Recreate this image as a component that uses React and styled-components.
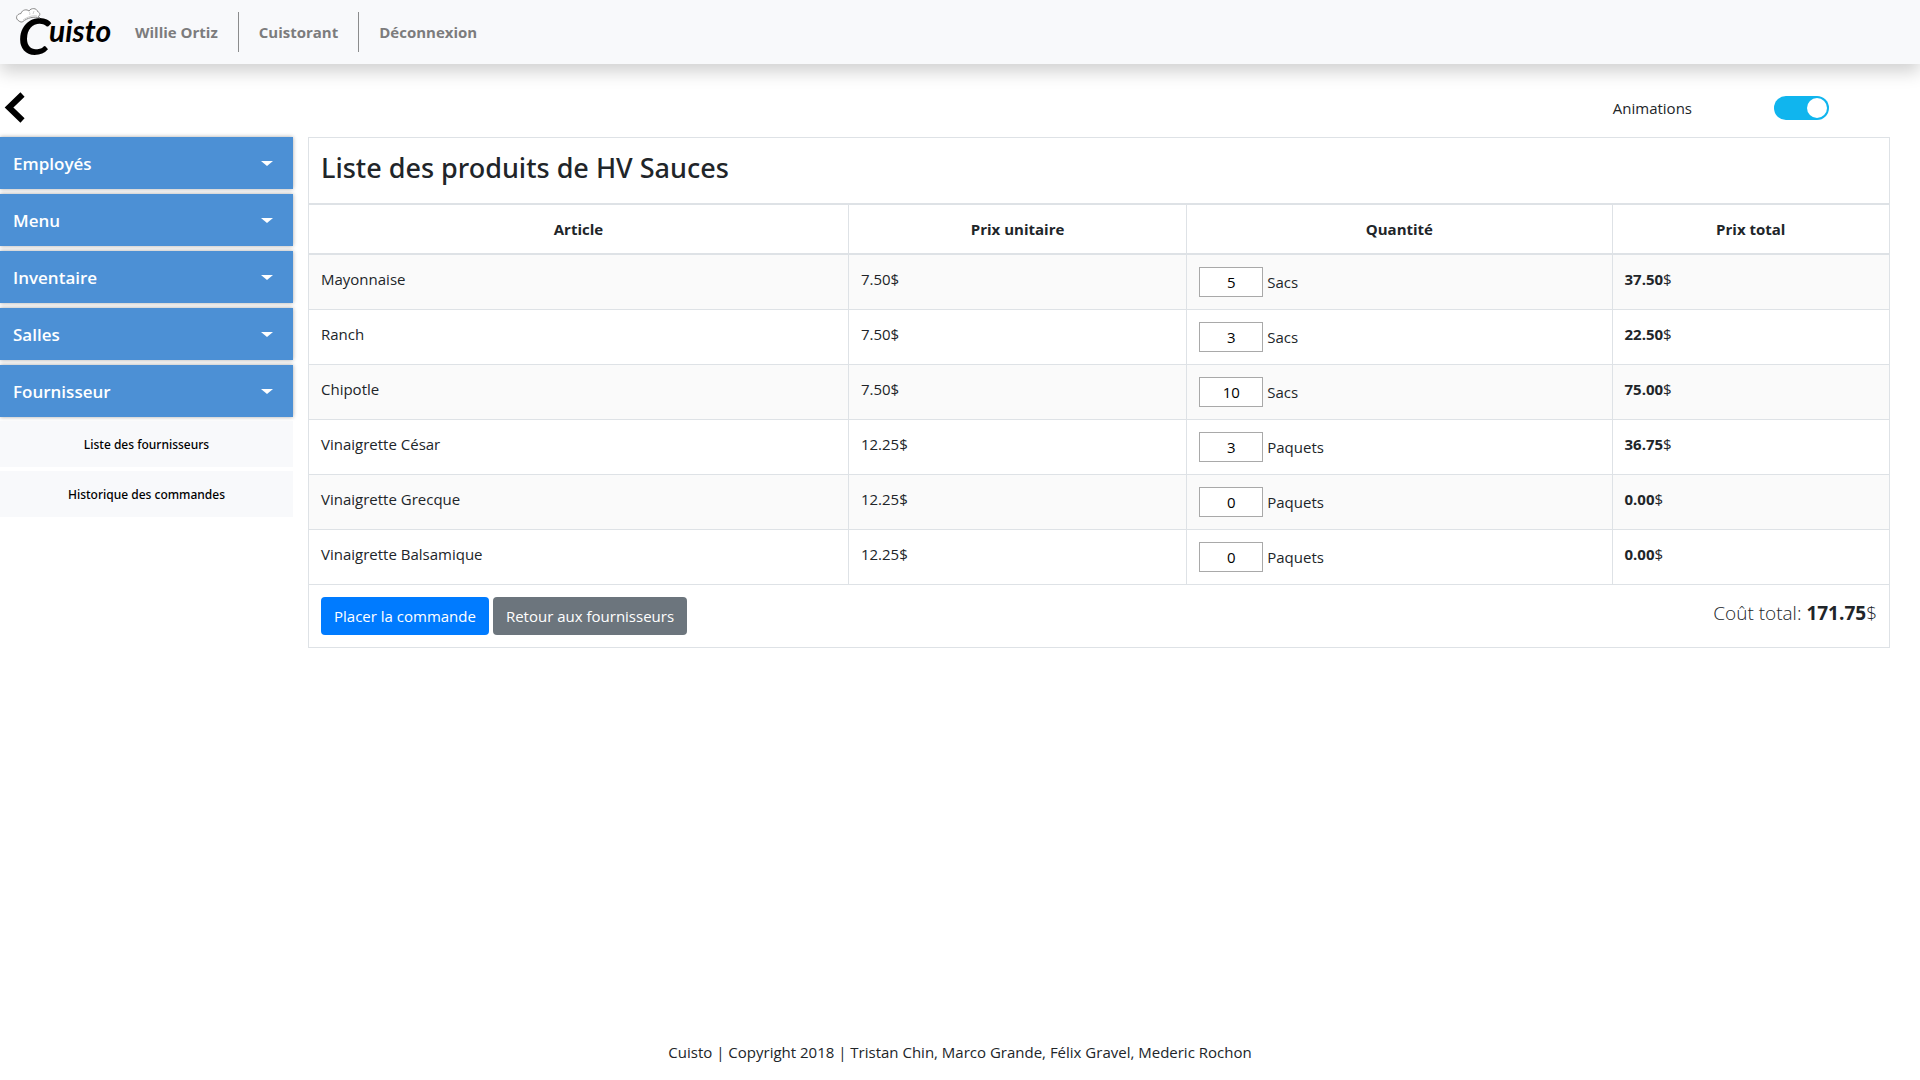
import React, { useState } from "react";
import styled, { createGlobalStyle } from "styled-components";

const GlobalStyle = createGlobalStyle`
  *, *::before, *::after { box-sizing: border-box; }
  body {
    margin: 0;
    background: #fff;
    color: #212529;
    font-family: "Open Sans", "Noto Sans", sans-serif;
    font-size: 15px;
    line-height: 24px;
  }
  input, button { font-family: inherit; font-size: inherit; }
  b { font-weight: 700; }
`;

const Page = styled.div`
  display: flex;
  flex-direction: column;
  min-height: 100vh;
`;

const Header = styled.header`
  display: flex;
  align-items: center;
  height: 64px;
  padding-left: 15px;
  background: #f8f9fb;
  box-shadow: 0 8px 16px rgba(0, 0, 0, 0.18);
`;

const Brand = styled.a`
  display: block;
  height: 64px;
  width: 100px;
  color: #000;
`;

const Wordmark = styled.text`
  font-family: Lato, "Open Sans", sans-serif;
  font-style: italic;
  font-size: ${(p) => p.$size}px;
  font-weight: ${(p) => p.$weight};
`;

const Nav = styled.nav`
  display: flex;
  align-items: center;
`;

const NavLink = styled.a`
  display: flex;
  align-items: center;
  height: 40px;
  padding: 0 20px;
  color: #7c7c7d;
  font-weight: 700;
  text-decoration: none;
  & + & { border-left: 1px solid #8b8c8d; }
`;

const Toolbar = styled.div`
  display: flex;
  align-items: center;
  justify-content: space-between;
  height: 73px;
  padding: 14px 91px 0 4px;
`;

const BackButton = styled.button`
  display: flex;
  padding: 0;
  border: 0;
  background: none;
  cursor: pointer;
`;

const ToggleLabel = styled.label`
  display: flex;
  align-items: center;
  gap: 82px;
`;

const Toggle = styled.input`
  appearance: none;
  display: flex;
  align-items: center;
  justify-content: flex-start;
  width: 55px;
  height: 24px;
  margin: 0;
  padding: 0 2px;
  border-radius: 12px;
  background: #ccc;
  cursor: pointer;
  &::before {
    content: "";
    width: 20px;
    height: 20px;
    border-radius: 50%;
    background: #fff;
  }
  &:checked {
    justify-content: flex-end;
    background: #10b5ee;
  }
`;

const Body = styled.div`
  display: grid;
  grid-template-columns: 293px minmax(0, 1fr);
  column-gap: 15px;
  align-items: start;
  padding-right: 30px;
`;

const Sidebar = styled.nav`
  display: flex;
  flex-direction: column;
  gap: 4px;
`;

const MenuGroup = styled.div`
  display: flex;
  flex-direction: column;
  gap: 5px;
`;

const MenuButton = styled.button`
  display: flex;
  align-items: center;
  justify-content: space-between;
  height: 52px;
  padding: 0 20px 0 13px;
  border: 0;
  background: #4c90d5;
  box-shadow: 0 0 4px rgba(0, 0, 0, 0.35);
  color: #fff;
  font-size: 17px;
  font-weight: 600;
  cursor: pointer;
`;

const Caret = styled.span`
  border: 6px solid transparent;
  border-top: 5px solid #fff;
  border-bottom: 0;
`;

const SubLink = styled.a`
  display: flex;
  align-items: center;
  justify-content: center;
  height: 46px;
  padding-top: 2px;
  background: #f8f9fb;
  color: #000;
  font-family: "Noto Sans", "Open Sans", sans-serif;
  font-size: 12px;
  font-weight: 500;
  text-decoration: none;
`;

const Table = styled.table`
  width: 100%;
  table-layout: fixed;
  border-collapse: collapse;
`;

const Col = styled.col`
  width: ${(p) => p.$share}%;
`;

const HeadCell = styled.th`
  padding: 12px;
  border: 1px solid #dee2e6;
  border-bottom-width: 2px;
  text-align: ${(p) => p.$align || "center"};
  font-weight: 700;
`;

const Title = styled.h3`
  margin: 0 0 6px;
  font-family: "Noto Sans", "Open Sans", sans-serif;
  font-size: 27px;
  font-weight: 500;
  line-height: 35px;
`;

const Row = styled.tr`
  &:nth-child(odd) { background: #fafafa; }
`;

const Cell = styled.td`
  padding: 12px;
  border: 1px solid #dee2e6;
  vertical-align: top;
`;

const Quantity = styled.label`
  display: flex;
  align-items: center;
  gap: 4px;
`;

const QuantityInput = styled.input`
  width: 64px;
  height: 30px;
  padding: 0;
  border: 1px solid #a9a9a9;
  background: #fff;
  color: #000;
  text-align: center;
`;

const FooterBar = styled.div`
  display: flex;
  align-items: flex-start;
  justify-content: space-between;
`;

const Actions = styled.div`
  display: flex;
  gap: 4px;
`;

const ActionButton = styled.button`
  height: 38px;
  padding: 0 13px;
  border: 0;
  border-radius: 4px;
  background: ${(p) => (p.$primary ? "#007bff" : "#6c757d")};
  color: #fff;
  cursor: pointer;
`;

const Total = styled.span`
  font-size: 19px;
  font-weight: 300;
  line-height: 32px;
`;

const Copyright = styled.footer`
  margin-top: auto;
  padding: 16px;
  text-align: center;
`;

const menus = ["Employés", "Menu", "Inventaire", "Salles", "Fournisseur"];
const submenus = ["Liste des fournisseurs", "Historique des commandes"];

const initialProducts = [
  { name: "Mayonnaise", price: 7.5, quantity: 5, unit: "Sacs" },
  { name: "Ranch", price: 7.5, quantity: 3, unit: "Sacs" },
  { name: "Chipotle", price: 7.5, quantity: 10, unit: "Sacs" },
  { name: "Vinaigrette César", price: 12.25, quantity: 3, unit: "Paquets" },
  { name: "Vinaigrette Grecque", price: 12.25, quantity: 0, unit: "Paquets" },
  { name: "Vinaigrette Balsamique", price: 12.25, quantity: 0, unit: "Paquets" },
];

function Logo() {
  return (
    <svg width="100" height="72" viewBox="15 0 100 72" aria-hidden="true">
      <Wordmark x="18" y="55" $size={52} $weight={700} fill="#000">C</Wordmark>
      <Wordmark x="49" y="42" $size={30} $weight={700} fill="#000">uisto</Wordmark>
      <path
        d="M19 21 C15 19 16 14 21 13.500 C22 9.500 27 9 29 11 C31 7.500 37 8 37.500 11.500 C41 13 40 16 38 16.500 L40 18 C34 16 27 18 23 21.500 C22 22.500 20 22 19 21 Z"
        fill="#fff"
        stroke="#8a8a8a"
        strokeWidth="1"
        strokeLinejoin="round"
      />
      <path d="M23 20 C27 17 33 15 37 16 M29 11.500 C30 13 30 14 29.500 15 M34 11 L33 14" fill="none" stroke="#c4c4c4" strokeWidth="0.8" />
    </svg>
  );
}

export default function App() {
  const [animations, setAnimations] = useState(true);
  const [products, setProducts] = useState(initialProducts);
  const total = products.reduce((sum, p) => sum + p.price * p.quantity, 0);

  const changeQuantity = (index, value) =>
    setProducts(products.map((p, i) => (i === index ? { ...p, quantity: Number(value) || 0 } : p)));

  return (
    <Page>
      <GlobalStyle />
      <Header>
        <Brand href="#" aria-label="Cuisto"><Logo /></Brand>
        <Nav>
          <NavLink href="#">Willie Ortiz</NavLink>
          <NavLink href="#">Cuistorant</NavLink>
          <NavLink href="#">Déconnexion</NavLink>
        </Nav>
      </Header>
      <Toolbar>
        <BackButton type="button" aria-label="Retour">
          <svg width="22" height="32" viewBox="0 0 22 32" aria-hidden="true">
            <path d="M18.500 2.500 L5 15.500 L18.500 28.500" fill="none" stroke="#000" strokeWidth="6" />
          </svg>
        </BackButton>
        <ToggleLabel>
          Animations
          <Toggle type="checkbox" checked={animations} onChange={(e) => setAnimations(e.target.checked)} />
        </ToggleLabel>
      </Toolbar>
      <Body>
        <Sidebar>
          <MenuGroup>
            {menus.map((label) => (
              <MenuButton type="button" key={label}>{label}<Caret /></MenuButton>
            ))}
          </MenuGroup>
          {submenus.map((label) => (
            <SubLink href="#" key={label}>{label}</SubLink>
          ))}
        </Sidebar>
        <Table>
          <colgroup>
            <Col $share={34.15} />
            <Col $share={21.4} />
            <Col $share={26.9} />
            <Col $share={17.55} />
          </colgroup>
          <thead>
            <tr>
              <HeadCell colSpan={4} $align="left"><Title>Liste des produits de HV Sauces</Title></HeadCell>
            </tr>
            <tr>
              <HeadCell>Article</HeadCell>
              <HeadCell>Prix unitaire</HeadCell>
              <HeadCell>Quantité</HeadCell>
              <HeadCell>Prix total</HeadCell>
            </tr>
          </thead>
          <tbody>
            {products.map((p, i) => (
              <Row key={p.name}>
                <Cell>{p.name}</Cell>
                <Cell>{p.price.toFixed(2)}$</Cell>
                <Cell>
                  <Quantity>
                    <QuantityInput value={p.quantity} onChange={(e) => changeQuantity(i, e.target.value)} />
                    {p.unit}
                  </Quantity>
                </Cell>
                <Cell><b>{(p.price * p.quantity).toFixed(2)}</b>$</Cell>
              </Row>
            ))}
          </tbody>
          <tfoot>
            <tr>
              <Cell colSpan={4}>
                <FooterBar>
                  <Actions>
                    <ActionButton type="button" $primary>Placer la commande</ActionButton>
                    <ActionButton type="button">Retour aux fournisseurs</ActionButton>
                  </Actions>
                  <Total>Coût total: <b>{total.toFixed(2)}</b>$</Total>
                </FooterBar>
              </Cell>
            </tr>
          </tfoot>
        </Table>
      </Body>
      <Copyright>Cuisto | Copyright 2018 | Tristan Chin, Marco Grande, Félix Gravel, Mederic Rochon</Copyright>
    </Page>
  );
}
